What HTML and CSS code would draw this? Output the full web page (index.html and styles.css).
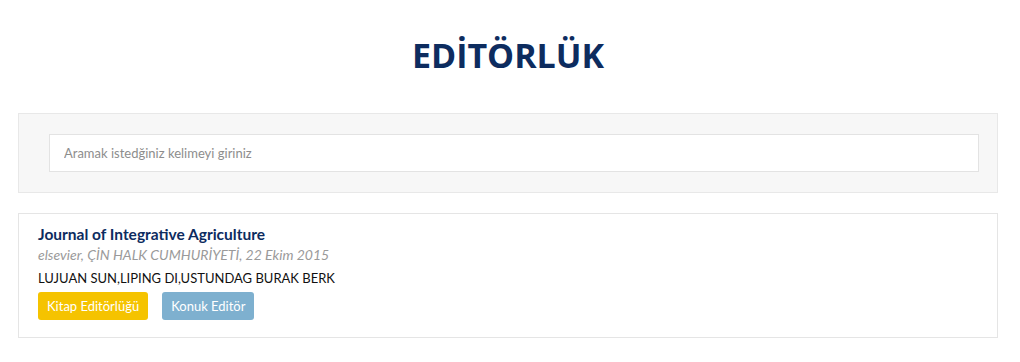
FILE: index.html
```html
<!DOCTYPE html>
<html>
<head>
    <meta charset="utf-8">
    <title>Editörlük</title>
    <link rel="stylesheet" href="styles.css">
</head>
<body>
    <div class="main">
        <h1 class="page-title">EDİTÖRLÜK</h1>

        <div class="search-box">
            <input type="text" class="search-input" placeholder="Aramak istedğiniz kelimeyi giriniz" />
        </div>

        <div class="item">
            <div class="item-title">Journal of Integrative Agriculture</div>
            <div class="item-meta">elsevier, ÇİN HALK CUMHURİYETİ, 22 Ekim 2015</div>
            <div class="item-authors">LUJUAN SUN,LIPING DI,USTUNDAG BURAK BERK</div>
            <div class="tags">
                <span class="tag tag-yellow">Kitap Editörlüğü</span>
                <span class="tag tag-blue">Konuk Editör</span>
            </div>
        </div>
    </div>
</body>
</html>
```

FILE: styles.css
```css
body {
    margin: 0;
    font-family: Lato, "Open Sans", sans-serif;
    background: #fff;
}

.main {
    width: 980px;
    margin: 0 0 0 18px;
}

.page-title {
    margin: 0;
    padding: 32px 0 0;
    height: 81px;
    text-align: center;
    font-family: "Open Sans", sans-serif;
    font-size: 34px;
    font-weight: 700;
    color: #0d2c5f;
}

.search-box {
    background: #f7f7f7;
    border: 1px solid #e8e8e8;
    padding: 20px 18px 20px 30px;
}

.search-input {
    display: block;
    box-sizing: border-box;
    width: 100%;
    height: 38px;
    padding: 0 14px;
    border: 1px solid #e3e3e3;
    background: #fff;
    font-family: Lato, sans-serif;
    font-size: 13px;
    outline: 0;
}

    .search-input::placeholder {
        color: #8d8d8d;
    }

.item {
    margin-top: 20px;
    border: 1px solid #e5e5e5;
    padding: 10px 19px 17px;
}

.item-title {
    font-size: 15.5px;
    font-weight: 700;
    color: #0d2c5f;
    line-height: 20px;
}

.item-meta {
    font-size: 14px;
    font-style: italic;
    color: #9a9a9a;
    line-height: 22px;
}

.item-authors {
    font-size: 13px;
    color: #111;
    line-height: 24px;
}

.tags {
    margin-top: 2px;
    display: flex;
    gap: 14px;
}

.tag {
    display: inline-block;
    padding: 0 9px;
    height: 28px;
    line-height: 28px;
    font-size: 13px;
    color: #fff;
    border-radius: 3px;
}

.tag-yellow {
    background: #f5c300;
}

.tag-blue {
    background: #7eb0cf;
}
```
